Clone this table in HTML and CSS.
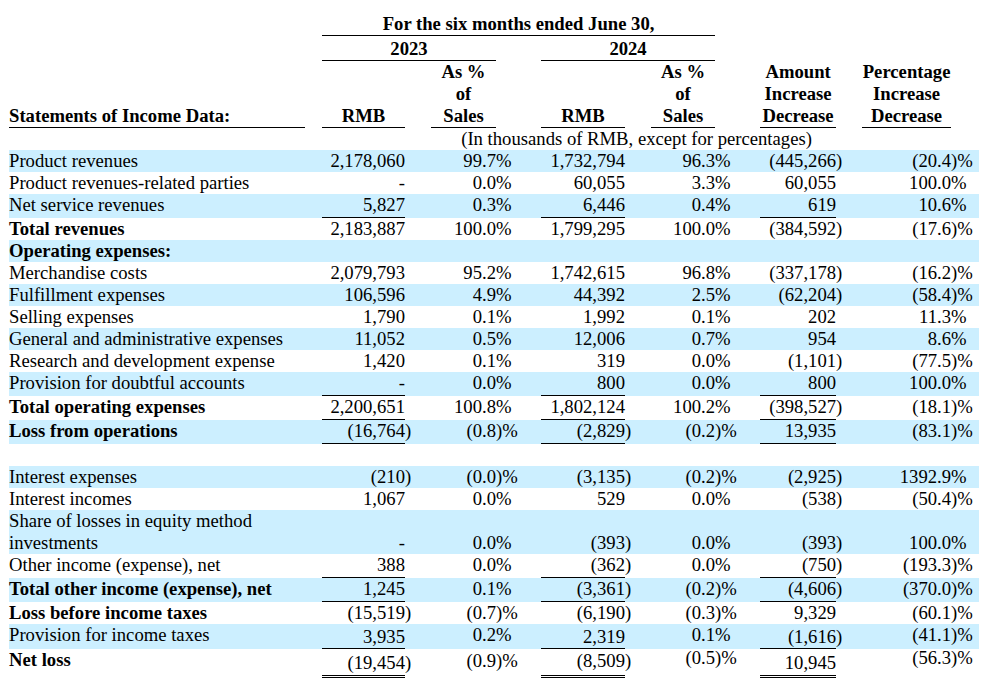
FILE: index.html
```html
<!DOCTYPE html>
<html>
<head>
<meta charset="utf-8">
<title>Statements of Income Data</title>
<link rel="stylesheet" href="styles.css">
</head>
<body>
<table class="fin">
  <colgroup>
    <col class="c-label"><col class="c-gap">
    <col class="c-rmb23"><col class="c-sfx">
    <col class="c-pct23"><col class="c-psfx">
    <col class="c-rmb24"><col class="c-sfx">
    <col class="c-pct24"><col class="c-psfx">
    <col class="c-amt"><col class="c-sfx">
    <col class="c-chg"><col class="c-lsfx">
  </colgroup>
  <thead>
    <tr class="hr1">
      <th colspan="2"></th>
      <th colspan="7" class="hc u">For the six months ended June 30,</th>
      <th colspan="5"></th>
    </tr>
    <tr class="hr2">
      <th colspan="2"></th>
      <th colspan="3" class="hc u">2023</th>
      <th></th>
      <th colspan="3" class="hc u">2024</th>
      <th colspan="5"></th>
    </tr>
    <tr class="hr3">
      <th class="hl u">Statements of Income Data:</th>
      <th></th>
      <th class="hc u">RMB</th>
      <th></th>
      <th class="hc u">As %<br>of<br>Sales</th>
      <th></th>
      <th class="hc u">RMB</th>
      <th></th>
      <th class="hc u">As %<br>of<br>Sales</th>
      <th></th>
      <th class="hc u">Amount<br>Increase<br>Decrease</th>
      <th></th>
      <th class="hc u">Percentage<br>Increase<br>Decrease</th>
      <th></th>
    </tr>
    <tr class="hr4">
      <td colspan="2"></td>
      <td colspan="11" class="note">(In thousands of RMB, except for percentages)</td>
      <td></td>
    </tr>
  </thead>
  <tbody>
    <tr class="bl">
      <td class="l">Product revenues</td><td></td>
      <td class="n">2,178,060</td><td class="s"></td>
      <td class="n">99.7</td><td class="s">%</td>
      <td class="n">1,732,794</td><td class="s"></td>
      <td class="n">96.3</td><td class="s">%</td>
      <td class="n">(445,266</td><td class="s">)</td>
      <td class="n">(20.4</td><td class="s">)%</td>
    </tr>
    <tr>
      <td class="l">Product revenues-related parties</td><td></td>
      <td class="n">-</td><td class="s"></td>
      <td class="n">0.0</td><td class="s">%</td>
      <td class="n">60,055</td><td class="s"></td>
      <td class="n">3.3</td><td class="s">%</td>
      <td class="n">60,055</td><td class="s"></td>
      <td class="n">100.0</td><td class="s">%</td>
    </tr>
    <tr class="bl">
      <td class="l">Net service revenues</td><td></td>
      <td class="n u">5,827</td><td class="s"></td>
      <td class="n">0.3</td><td class="s">%</td>
      <td class="n u">6,446</td><td class="s"></td>
      <td class="n">0.4</td><td class="s">%</td>
      <td class="n u">619</td><td class="s"></td>
      <td class="n">10.6</td><td class="s">%</td>
    </tr>
    <tr>
      <td class="l b">Total revenues</td><td></td>
      <td class="n">2,183,887</td><td class="s"></td>
      <td class="n">100.0</td><td class="s">%</td>
      <td class="n">1,799,295</td><td class="s"></td>
      <td class="n">100.0</td><td class="s">%</td>
      <td class="n">(384,592</td><td class="s">)</td>
      <td class="n">(17.6</td><td class="s">)%</td>
    </tr>
    <tr class="bl">
      <td class="l b">Operating expenses:</td><td colspan="13"></td>
    </tr>
    <tr>
      <td class="l">Merchandise costs</td><td></td>
      <td class="n">2,079,793</td><td class="s"></td>
      <td class="n">95.2</td><td class="s">%</td>
      <td class="n">1,742,615</td><td class="s"></td>
      <td class="n">96.8</td><td class="s">%</td>
      <td class="n">(337,178</td><td class="s">)</td>
      <td class="n">(16.2</td><td class="s">)%</td>
    </tr>
    <tr class="bl">
      <td class="l">Fulfillment expenses</td><td></td>
      <td class="n">106,596</td><td class="s"></td>
      <td class="n">4.9</td><td class="s">%</td>
      <td class="n">44,392</td><td class="s"></td>
      <td class="n">2.5</td><td class="s">%</td>
      <td class="n">(62,204</td><td class="s">)</td>
      <td class="n">(58.4</td><td class="s">)%</td>
    </tr>
    <tr>
      <td class="l">Selling expenses</td><td></td>
      <td class="n">1,790</td><td class="s"></td>
      <td class="n">0.1</td><td class="s">%</td>
      <td class="n">1,992</td><td class="s"></td>
      <td class="n">0.1</td><td class="s">%</td>
      <td class="n">202</td><td class="s"></td>
      <td class="n">11.3</td><td class="s">%</td>
    </tr>
    <tr class="bl">
      <td class="l">General and administrative expenses</td><td></td>
      <td class="n">11,052</td><td class="s"></td>
      <td class="n">0.5</td><td class="s">%</td>
      <td class="n">12,006</td><td class="s"></td>
      <td class="n">0.7</td><td class="s">%</td>
      <td class="n">954</td><td class="s"></td>
      <td class="n">8.6</td><td class="s">%</td>
    </tr>
    <tr>
      <td class="l">Research and development expense</td><td></td>
      <td class="n">1,420</td><td class="s"></td>
      <td class="n">0.1</td><td class="s">%</td>
      <td class="n">319</td><td class="s"></td>
      <td class="n">0.0</td><td class="s">%</td>
      <td class="n">(1,101</td><td class="s">)</td>
      <td class="n">(77.5</td><td class="s">)%</td>
    </tr>
    <tr class="bl">
      <td class="l">Provision for doubtful accounts</td><td></td>
      <td class="n u">-</td><td class="s"></td>
      <td class="n">0.0</td><td class="s">%</td>
      <td class="n u">800</td><td class="s"></td>
      <td class="n">0.0</td><td class="s">%</td>
      <td class="n u">800</td><td class="s"></td>
      <td class="n">100.0</td><td class="s">%</td>
    </tr>
    <tr>
      <td class="l b">Total operating expenses</td><td></td>
      <td class="n u">2,200,651</td><td class="s"></td>
      <td class="n">100.8</td><td class="s">%</td>
      <td class="n u">1,802,124</td><td class="s"></td>
      <td class="n">100.2</td><td class="s">%</td>
      <td class="n u">(398,527</td><td class="s">)</td>
      <td class="n">(18.1</td><td class="s">)%</td>
    </tr>
    <tr class="bl">
      <td class="l b">Loss from operations</td><td></td>
      <td class="n u">(16,764</td><td class="s">)</td>
      <td class="n">(0.8</td><td class="s">)%</td>
      <td class="n u">(2,829</td><td class="s">)</td>
      <td class="n">(0.2</td><td class="s">)%</td>
      <td class="n u">13,935</td><td class="s"></td>
      <td class="n">(83.1</td><td class="s">)%</td>
    </tr>
    <tr class="blank">
      <td colspan="14"></td>
    </tr>
    <tr class="bl">
      <td class="l">Interest expenses</td><td></td>
      <td class="n">(210</td><td class="s">)</td>
      <td class="n">(0.0</td><td class="s">)%</td>
      <td class="n">(3,135</td><td class="s">)</td>
      <td class="n">(0.2</td><td class="s">)%</td>
      <td class="n">(2,925</td><td class="s">)</td>
      <td class="n">1392.9</td><td class="s">%</td>
    </tr>
    <tr>
      <td class="l">Interest incomes</td><td></td>
      <td class="n">1,067</td><td class="s"></td>
      <td class="n">0.0</td><td class="s">%</td>
      <td class="n">529</td><td class="s"></td>
      <td class="n">0.0</td><td class="s">%</td>
      <td class="n">(538</td><td class="s">)</td>
      <td class="n">(50.4</td><td class="s">)%</td>
    </tr>
    <tr class="bl two">
      <td class="l">Share of losses in equity method investments</td><td></td>
      <td class="n">-</td><td class="s"></td>
      <td class="n">0.0</td><td class="s">%</td>
      <td class="n">(393</td><td class="s">)</td>
      <td class="n">0.0</td><td class="s">%</td>
      <td class="n">(393</td><td class="s">)</td>
      <td class="n">100.0</td><td class="s">%</td>
    </tr>
    <tr>
      <td class="l">Other income (expense), net</td><td></td>
      <td class="n u">388</td><td class="s"></td>
      <td class="n">0.0</td><td class="s">%</td>
      <td class="n u">(362</td><td class="s">)</td>
      <td class="n">0.0</td><td class="s">%</td>
      <td class="n u">(750</td><td class="s">)</td>
      <td class="n">(193.3</td><td class="s">)%</td>
    </tr>
    <tr class="bl">
      <td class="l b">Total other income (expense), net</td><td></td>
      <td class="n u">1,245</td><td class="s"></td>
      <td class="n">0.1</td><td class="s">%</td>
      <td class="n u">(3,361</td><td class="s">)</td>
      <td class="n">(0.2</td><td class="s">)%</td>
      <td class="n u">(4,606</td><td class="s">)</td>
      <td class="n">(370.0</td><td class="s">)%</td>
    </tr>
    <tr>
      <td class="l b">Loss before income taxes</td><td></td>
      <td class="n">(15,519</td><td class="s">)</td>
      <td class="n">(0.7</td><td class="s">)%</td>
      <td class="n">(6,190</td><td class="s">)</td>
      <td class="n">(0.3</td><td class="s">)%</td>
      <td class="n">9,329</td><td class="s"></td>
      <td class="n">(60.1</td><td class="s">)%</td>
    </tr>
    <tr class="bl">
      <td class="l">Provision for income taxes</td><td></td>
      <td class="n u lo">3,935</td><td class="s"></td>
      <td class="n">0.2</td><td class="s">%</td>
      <td class="n u lo">2,319</td><td class="s"></td>
      <td class="n">0.1</td><td class="s">%</td>
      <td class="n u lo">(1,616</td><td class="s lo">)</td>
      <td class="n">(41.1</td><td class="s">)%</td>
    </tr>
    <tr class="last">
      <td class="l b">Net loss</td><td></td>
      <td class="n dd">(19,454</td><td class="s dl">)</td>
      <td class="n lo1">(0.9</td><td class="s lo1">)%</td>
      <td class="n dd dd1">(8,509</td><td class="s dl dl1">)</td>
      <td class="n"><span class="up">(0.5</span></td><td class="s"><span class="up">)%</span></td>
      <td class="n dd">10,945</td><td class="s"></td>
      <td class="n"><span class="up">(56.3</span></td><td class="s"><span class="up">)%</span></td>
    </tr>
  </tbody>
</table>
</body>
</html>
```

FILE: styles.css
```css
html, body {
  margin: 0;
  padding: 0;
  background: #ffffff;
}

body {
  font-family: "Liberation Serif", "Times New Roman", serif;
  font-size: 18.67px;
  color: #000000;
}

.fin {
  margin: 13px 0 0 9px;
  border-collapse: separate;
  border-spacing: 0;
  table-layout: fixed;
  width: 970px;
}

.c-label { width: 296px; }
.c-gap { width: 17px; }
.c-rmb23 { width: 83px; }
.c-sfx { width: 26px; }
.c-pct23 { width: 65px; }
.c-psfx { width: 45px; }
.c-rmb24 { width: 84px; }
.c-pct24 { width: 64px; }
.c-amt { width: 76px; }
.c-chg { width: 89px; }
.c-lsfx { width: 28px; }

.fin th,
.fin td {
  padding: 0;
  line-height: 22px;
  vertical-align: top;
  white-space: nowrap;
}

.fin th {
  font-weight: bold;
}

.hc {
  text-align: center;
}

.hl {
  text-align: left;
  vertical-align: bottom !important;
}

.hr1 th.u {
  border-bottom: 1px solid #000;
}

.hr2 th {
  padding-top: 2px;
}

.hr2 th.u {
  border-bottom: 1px solid #000;
}

.hr3 th {
  line-height: 22px;
  vertical-align: bottom;
}

.hr3 th.u {
  border-bottom: 1px solid #000;
}

.note {
  text-align: center;
}

.bl td {
  background: #ccefff;
}

.l {
  text-align: left;
}

.l.b {
  font-weight: bold;
}

.n {
  text-align: right;
}

.s {
  text-align: left;
}

.n.u {
  border-bottom: 1px solid #000;
  padding-bottom: 1px;
}

.blank td {
  height: 22px;
}

.two td.l {
  white-space: normal;
}

.two td.n,
.two td.s {
  vertical-align: bottom;
}

.lo {
  padding-top: 2px !important;
}

.n.u.lo {
  padding-bottom: 0;
}

.lo1 {
  padding-top: 1px !important;
}

.dd {
  border-bottom: 3px double #000;
  padding-top: 3px !important;
  padding-bottom: 1px !important;
}

.dd1 {
  padding-top: 1px !important;
  padding-bottom: 3px !important;
}

.dl {
  padding-top: 3px !important;
}

.dl1 {
  padding-top: 1px !important;
}

.up {
  display: block;
  margin-top: -2px;
}
```
